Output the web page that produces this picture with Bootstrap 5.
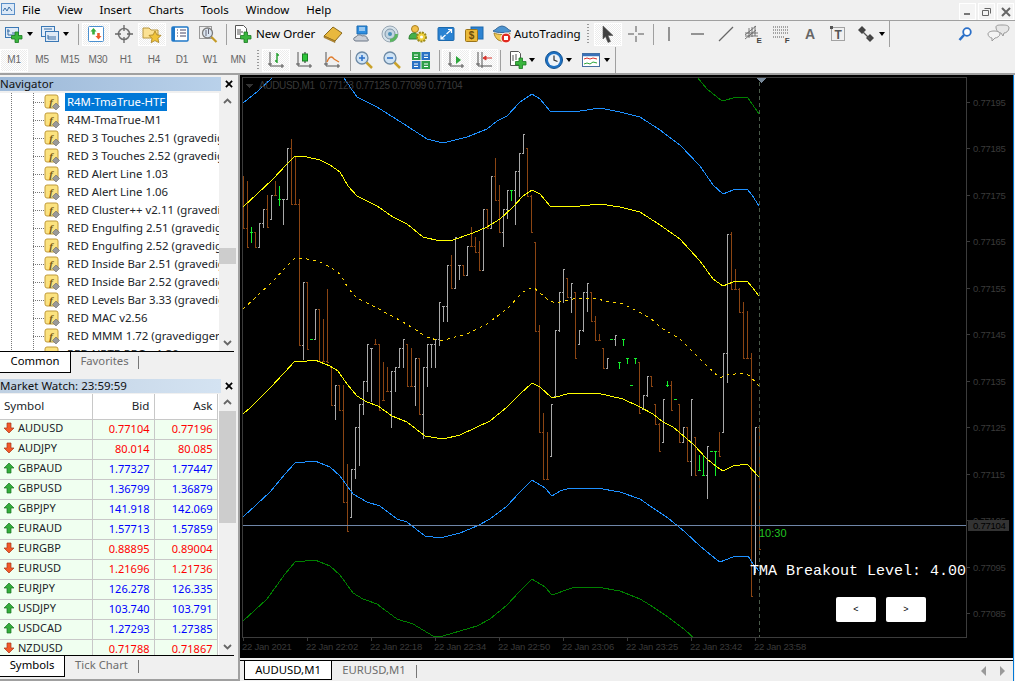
<!DOCTYPE html>
<html lang="en">
<head>
<meta charset="UTF-8">
<title>MetaTrader 4</title>
<link rel="stylesheet" href="https://cdn.jsdelivr.net/npm/bootstrap@5.3.0/dist/css/bootstrap.min.css">
<style>
html, body { background: #fff; overflow: hidden; }
body { font-family: "Noto Sans", "Liberation Sans", sans-serif; font-size: 12px; color: #000; line-height: 1; }
.app { width: 1015px; height: 681px; }

/* menu */
.menu-bar { height: 20px; background: #f0f0f0; padding: 0; flex-wrap: nowrap; }
.menu-bar.navbar-expand .navbar-nav { gap: 17px; margin: 4px 0 0 7px; }
.menu-bar.navbar-expand .navbar-nav .nav-link { font-size: 11.5px; color: #000; padding: 0; }
.app-icon { width: 14px; height: 16px; margin: 1px 0 0 1px; }
.win-btn { width: 17px; height: 17px; background: #f4f4f4; border: 1px solid #fff; margin-left: 2px; display: flex; align-items: center; justify-content: center; }
.win-btns { margin-right: 1px; }

/* toolbars */
.tb-wrap { height: 27px; background: #f0f0f0; border-top: 1px solid #a0a0a0; }
.tb-wrap.second { border-top: 0; height: 28px; border-bottom: 2px solid #a0a0a0; }
.tb-one { width: 890px; height: 27px; border-right: 1px solid #a0a0a0; border-bottom: 1px solid #a0a0a0; }
.tb-two { width: 616px; height: 26px; border-right: 1px solid #a0a0a0; }
.tb-btn { width: 28px; height: 23px; padding: 0; border: 1px solid transparent; border-radius: 0; background: transparent; display: flex; align-items: center; justify-content: center; flex: none; color: #666; font-size: 10px; letter-spacing: -.2px; font-family: "Liberation Sans", sans-serif; background-clip: padding-box; }
.tb-btn.on { background: repeating-conic-gradient(#ececec 0 25%, #fff 0 50%) 0 0 / 2px 2px; background-clip: padding-box; outline: 1px solid #fff; outline-offset: -1px; }
.tb-btn.wide { justify-content: flex-start; padding-left: 3px; gap: 3px; color: #000; font-size: 11.6px; letter-spacing: 0; font-family: "Noto Sans", sans-serif; }
.tb-order { width: 90px; }
.tb-auto { width: 94px; gap: 2px !important; font-size: 11.5px !important; }
.tb-caret { width: 8px; height: 8px; flex: none; display: flex; align-items: center; justify-content: center; }
.tb-caret::after { content: ""; border: 3px solid transparent; border-top: 4px solid #000; border-bottom: 0; }
.tb-sep { width: 1px; height: 21px; background: #a0a0a0; flex: none; }
.tb-grip { width: 2px; height: 21px; flex: none; background: repeating-linear-gradient(#999 0 1px, transparent 1px 3px); }
.ic { width: 20px; height: 20px; display: block; flex: none; }
.gl-n4 { margin-left: -4px; } .gl-n3 { margin-left: -3px; } .gl-n2 { margin-left: -2px; } .gl-n1 { margin-left: -1px; }
.gl-1 { margin-left: 1px; } .gl-2 { margin-left: 2px; } .gl-3 { margin-left: 3px; } .gl-4 { margin-left: 4px; } .gl-5 { margin-left: 5px; } .gl-8 { margin-left: 8px; }
.tb-right { gap: 11px; margin-right: 5px; }

/* left side */
.main-area { height: 606px; background: #f0f0f0; }
.side { width: 240px; height: 606px; padding-top: 2px; flex: none; border-right: 2px solid #a0a0a0; border-bottom: 2px solid #a0a0a0; background: #f0f0f0; }
.pane-title { height: 14px; display: flex; align-items: center; flex: none; }
.pane-title span { width: 221px; height: 14px; line-height: 14px; font-size: 11.5px; color: #111; overflow: hidden; white-space: nowrap; }
.title-on span { background: linear-gradient(90deg, #9db9d8, #b9d1ea); }
.title-off { margin-top: 6px; }
.title-off span { background: linear-gradient(90deg, #bfd0e2, #d4e3f2); }
.title-x { width: 8px; height: 8px; margin-left: 4px; }
.pane-body { display: flex; background: #fff; overflow: hidden; width: 236px; flex: none; }
.tree-pane { margin-top: 2px; }
.quote-pane { margin-top: 1px; }
.tree-box { width: 219px; height: 258px; overflow: hidden; background: #fff; }
.tree-row { height: 18px; display: flex; align-items: center; white-space: nowrap; padding: 0; border: 0; background: repeating-linear-gradient(#777 0 1px, transparent 1px 2px) 11px 0 / 1px 18px no-repeat, repeating-linear-gradient(#777 0 1px, transparent 1px 2px) 33px 0 / 1px 18px no-repeat; border-radius: 0; }
.tree-dash { width: 11px; margin-left: 33px; border-top: 1px dotted #777; flex: none; }
.tree-ic { width: 16px; height: 16px; flex: none; }
.tree-txt { margin-left: 5px; padding: 0 2px; height: 18px; line-height: 18px; font-size: 11.4px; }
.tree-txt.sel { background: #0078d7; color: #fff; }
.sbar { width: 17px; flex: none; background: #f0f0f0; display: flex; flex-direction: column; align-items: center; justify-content: space-between; padding: 5px 0; position: relative; }
.sbar svg { width: 9px; height: 6px; }
.sbar-tree { height: 258px; }
.sbar-quote { height: 261px; }
.sbar-thumb { position: absolute; left: 0; right: 0; background: #cdcdcd; }
.thumb-tree { top: 155px; height: 16px; }
.thumb-quote { top: 17px; height: 112px; }
.ui-tabs { display: flex; height: 22px; width: 234px; border-top: 1px solid #000; background: #f0f0f0; flex: none; }
.ui-tab { height: 21px; line-height: 18px; font-size: 11.3px; color: #6d6d6d; padding: 0; text-align: center; flex: none; }
.ui-tab.active { background: #fff; color: #000; border-right: 1px solid #000; border-bottom: 1px solid #000; }
.ui-sep { width: 1px; height: 13px; margin-top: 4px; background: #777; flex: none; }
.tw-71 { width: 71px; } .tw-67 { width: 67px; } .tw-65 { width: 65px; } .tw-73 { width: 73px; } .tw-88 { width: 88px; } .tw-85 { width: 84px; }
.quote-box { width: 219px; height: 261px; overflow: hidden; background: #fff; }
.quote-table { width: 217px; table-layout: fixed; margin: 0; --bs-table-border-color: #c8c8c8; --bs-table-bg: transparent; border-collapse: collapse; }
.quote-table .col-sym { width: 92px; } .quote-table .col-bid { width: 62px; } .quote-table .col-ask { width: 63px; }
.quote-table th, .quote-table td { padding: 0 4px; height: 20px; font-size: 11px; font-weight: 400; text-align: right; white-space: nowrap; vertical-align: middle; border: 1px solid #c8c8c8; border-top: 0; border-left: 0; }
.quote-table th { height: 25px; font-size: 11.6px; }
.quote-table td { background: #f0fff0; padding-bottom: 2px; }
.quote-table th:first-child, .quote-table td:first-child { text-align: left; }
.quote-table td:first-child svg { width: 12px; height: 12px; vertical-align: -2px; margin: 0 3px 0 -1px; }
.px-dn { color: #f00 !important; }
.px-up { color: #00f !important; }

/* chart */
.chart-col { width: 774px; height: 606px; border-right: 1px solid #0078d7; }
.chart-box { height: 583px; background: #000; }
.chart-box svg { display: block; }
.chart-btn { position: absolute; top: 522px; width: 40px; height: 25px; padding: 0; background: #fff; border: 0; border-radius: 2px; color: #000; font-size: 9px; font-family: "Liberation Sans", sans-serif; }
.cb-prev { left: 596px; }
.cb-next { left: 646px; }
.chart-tabs { height: 21px; margin-top: 2px; border-top: 1px solid #000; background: #efefef; padding-left: 4px; position: relative; }
.chart-tabs .ui-tab { height: 19px; line-height: 17px; }
.chart-tabs .ui-tab.active { border-left: 1px solid #000; }
.tab-arrows { gap: 10px; margin-right: 7px; margin-top: 5px; }
.scale-txt { font-size: 9.5px; letter-spacing: -.25px; fill: #3a3a3a; }
.chart-title { font-size: 10px; letter-spacing: -.34px; fill: #3a3a3a; }
</style>
</head>
<body>
<svg width="0" height="0" class="position-absolute">
  <defs>
    <symbol id="plus" viewBox="0 0 20 20"><path d="M11 8h3.500v3.500H18v3.500h-3.500V18.500H11V15H7.500v-3.500H11z" fill="#3ab53e" stroke="#1b7a22" stroke-width=".8"/></symbol>
    <symbol id="i-new" viewBox="0 0 20 20"><rect x="1.500" y="3.500" width="13" height="10" fill="#dfeaf6" stroke="#3b78b5"/><path d="M4 5v6h8M3 7h3M8 9h4" stroke="#3a6ea5" fill="none"/><use href="#plus"/></symbol>
    <symbol id="i-prof" viewBox="0 0 20 20"><rect x="1.500" y="2.500" width="13" height="10" fill="#e3edf8" stroke="#3b78b5"/><rect x="5.500" y="7.500" width="13" height="10" fill="#dfeaf6" stroke="#3b78b5"/><path d="M4 5h8M8 11v4h8M8 13h8" stroke="#3a6ea5" fill="none"/></symbol>
    <symbol id="i-mw" viewBox="0 0 20 20"><rect x="2.500" y="2.500" width="15" height="15" rx="1" fill="#fff" stroke="#4a90d0"/><path d="M7.500 4l3 3.500H8.800v3H6.200v-3H4.500z" fill="#37ad3c"/><path d="M12.500 15.500l-3-3.500h1.700V9h2.600v3h1.700z" fill="#ef5a2a"/></symbol>
    <symbol id="i-cross" viewBox="0 0 20 20"><circle cx="10" cy="10" r="5.500" fill="none" stroke="#777" stroke-width="1.600"/><path d="M10 1v6M10 13v6M1 10h6M13 10h6" stroke="#666" stroke-width="1.300"/></symbol>
    <symbol id="i-nav" viewBox="0 0 20 20"><path d="M1 4h6l2 2h7v8H1z" fill="#fbe193" stroke="#b8963e"/><path d="M13 7l1.900 3.900 4.100.5-3 3 .8 4.200-3.800-2-3.800 2 .8-4.200-3-3 4.100-.5z" fill="#f0c33a" stroke="#a67f1c" stroke-width=".8"/></symbol>
    <symbol id="i-term" viewBox="0 0 20 20"><rect x="2" y="3" width="16" height="14" rx="1" fill="#fff" stroke="#1f78c8" stroke-width="1.500"/><path d="M2 3h3v14H2z" fill="#1f78c8"/><path d="M7 6h1M7 9h1M7 12h1M10 6h6M10 9h6M10 12h6" stroke="#446" fill="none"/></symbol>
    <symbol id="i-test" viewBox="0 0 20 20"><rect x="1.500" y="2.500" width="12" height="12" fill="#eee" stroke="#999"/><circle cx="9.500" cy="9" r="5" fill="#dbe6f2" stroke="#7c7c7c" stroke-width="1.300"/><path d="M8 6v6M10.500 5v5" stroke="#667"/><path d="M13.500 13l5 5" stroke="#c59b26" stroke-width="2.200"/></symbol>
    <symbol id="i-order" viewBox="0 0 20 20"><path d="M2.500 1.500h8l3 3v10h-11z" fill="#fff" stroke="#555"/><path d="M4 6h4M4 8h6M4 10h4" stroke="#555"/><use href="#plus"/></symbol>
    <symbol id="i-book" viewBox="0 0 20 20"><path d="M1 12L10 3l9 6-7 8z" fill="#e8b83e" stroke="#8a6a1c"/><path d="M1 12l11 5v1.500L1 13.500z" fill="#c58d2b" stroke="#8a6a1c" stroke-width=".6"/></symbol>
    <symbol id="i-mkt" viewBox="0 0 20 20"><path d="M5 2h10v8H5z" fill="#2e8ee0" stroke="#1d6bb0"/><path d="M7 4h6M7 6h6" stroke="#fff"/><path d="M4 17c-3 0-3-4 0-4 1-2 4-3 6-1 3-1 6 1 5 3 2 0 2 2 0 2z" fill="#c9ced6" stroke="#6a7686"/></symbol>
    <symbol id="i-sig" viewBox="0 0 20 20"><circle cx="10" cy="10" r="8" fill="#d7e3ea" stroke="#98a6b3"/><circle cx="10" cy="10" r="5" fill="#c3d4e0" stroke="#7f95a8"/><circle cx="10" cy="10" r="2" fill="#4a8fb8"/><path d="M10 18a8 8 0 0 0 8-8h-3a5 5 0 0 1-5 5z" fill="#5cb560"/></symbol>
    <symbol id="i-usr" viewBox="0 0 20 20"><circle cx="7" cy="5" r="3.500" fill="#f3c04a" stroke="#a97f1f"/><path d="M1 15c0-5 3-6 5-6s4 1 4 6z" fill="#46b04a" stroke="#2a7f2e"/><circle cx="13.500" cy="13" r="4.500" fill="#efd13c" stroke="#9c8a1b" stroke-width="2" stroke-dasharray="2 1"/><circle cx="13.500" cy="13" r="1.500" fill="#fff"/></symbol>
    <symbol id="i-exp" viewBox="0 0 20 20"><rect x="2" y="3.500" width="16" height="13" rx="1" fill="#2a82d2" stroke="#1c69ad"/><path d="M10.500 10l5-4.500M12 5.500h3.500V9M9.500 11l-4.500 4M5 11.500V15h3.500" stroke="#fff" fill="none" stroke-width="1.200"/></symbol>
    <symbol id="i-usd" viewBox="0 0 20 20"><rect x="7" y="3" width="12" height="12" fill="#2d83d2" stroke="#1c69ad"/><rect x="1.500" y="5.500" width="12" height="12" rx="1" fill="#eab93a" stroke="#9b7419"/><text x="7.500" y="15" font-size="10" font-weight="700" text-anchor="middle" fill="#6b4d08" font-family="Liberation Sans">$</text></symbol>
    <symbol id="i-auto" viewBox="0 0 20 20"><path d="M1 7c3-1 5-5 9-5s6 4 9 5c-3 2-15 2-18 0z" fill="#4d94d0" stroke="#36699a"/><path d="M2 9c4 2 12 2 16 0-1 5-4 8-8 8S3 14 2 9z" fill="#f1cb57" stroke="#a98426"/><circle cx="14" cy="14" r="5" fill="#e02a20" stroke="#fff"/><rect x="12" y="12" width="4" height="4" fill="#fff"/></symbol>
    <symbol id="i-ptr" viewBox="0 0 20 20"><path d="M5 2l10 9.500h-5l2.500 6-2.500 1-2.500-6L5 15z" fill="#404040" stroke="#555" stroke-width=".6"/></symbol>
    <symbol id="i-hair" viewBox="0 0 20 20"><path d="M10 2v6M10 12v6M2 10h6M12 10h6" stroke="#555"/></symbol>
    <symbol id="i-vl" viewBox="0 0 20 20"><path d="M10 3v14" stroke="#555" stroke-width="1.200"/></symbol>
    <symbol id="i-hl" viewBox="0 0 20 20"><path d="M3 10h13" stroke="#555" stroke-width="1.200"/></symbol>
    <symbol id="i-tl" viewBox="0 0 20 20"><path d="M3 17L17 3" stroke="#666" stroke-width="1.200"/></symbol>
    <symbol id="i-chan" viewBox="0 0 20 20"><path d="M1 11L12 2M1 15L12 6M5 4v10M8 3v10M11 2v10M1 9h13M1 12h13" stroke="#666" fill="none" stroke-width=".9"/><text x="15" y="19" font-size="8" font-weight="700" text-anchor="middle" fill="#444" font-family="Liberation Sans">E</text></symbol>
    <symbol id="i-fibo" viewBox="0 0 20 20"><path d="M1 3h15M1 6h15M1 9h15M1 13h11" stroke="#555" stroke-dasharray="1 1"/><text x="15" y="19" font-size="8" font-weight="700" text-anchor="middle" fill="#444" font-family="Liberation Sans">F</text></symbol>
    <symbol id="i-txt" viewBox="0 0 20 20"><text x="10" y="15" font-size="14" font-weight="700" text-anchor="middle" fill="#666" font-family="Liberation Sans">A</text></symbol>
    <symbol id="i-lab" viewBox="0 0 20 20"><rect x="3.500" y="3.500" width="13" height="13" fill="none" stroke="#555" stroke-dasharray="1 1"/><rect x="2" y="2" width="3" height="3" fill="#555"/><text x="10" y="14.500" font-size="12" font-weight="700" text-anchor="middle" fill="#555" font-family="Liberation Sans">T</text></symbol>
    <symbol id="i-arr" viewBox="0 0 20 20"><path d="M6 2l4 4-4 4-4-4zM14 10l4 4-4 4-4-4z" fill="#444"/><path d="M7 8l7 7" stroke="#555" stroke-width="1.300"/></symbol>
    <symbol id="i-search" viewBox="0 0 20 20"><circle cx="12" cy="8" r="3.800" fill="#fff" stroke="#2a6fc8" stroke-width="1.800"/><path d="M9 11l-4.500 5" stroke="#2a6fc8" stroke-width="2.600"/></symbol>
    <symbol id="i-chat" viewBox="0 0 24 20"><path d="M10 3c0-2 3-2 6-2s7 0 7 3-3 5-5 5l-1 3-2-3c-3 0-5-3-5-6z" fill="#e6e6e6" stroke="#999"/><path d="M2 10c0-2 3-3 6-3s6 1 6 3-3 4-5 4l-3 3v-3c-2 0-4-2-4-4z" fill="#f4f4f4" stroke="#999"/></symbol>
    <symbol id="i-axes" viewBox="0 0 20 20"><path d="M4 2v14h14M2 14h4M16 14v4" stroke="#555" fill="none"/></symbol>
    <symbol id="i-bar" viewBox="0 0 20 20"><use href="#i-axes"/><path d="M11 3v10M9 11h2M11 5h2" stroke="#1f9d2a" stroke-width="1.400" fill="none"/></symbol>
    <symbol id="i-cnd" viewBox="0 0 20 20"><use href="#i-axes"/><path d="M11 2v11" stroke="#222"/><rect x="8.500" y="4" width="5" height="7" fill="#2ec43a" stroke="#1a7f24"/></symbol>
    <symbol id="i-lin" viewBox="0 0 20 20"><use href="#i-axes"/><path d="M5 12c2-6 5-6 7-3l5 3" stroke="#e07a2a" fill="none" stroke-width="1.300"/></symbol>
    <symbol id="i-zin" viewBox="0 0 20 20"><circle cx="8" cy="8" r="6" fill="#cfe3f4" stroke="#6d8aa5" stroke-width="1.300"/><path d="M5 8h6M8 5v6" stroke="#2a6fc8" stroke-width="1.500"/><path d="M12.500 12.500l5.500 5.500" stroke="#caa22b" stroke-width="2.500"/></symbol>
    <symbol id="i-zout" viewBox="0 0 20 20"><circle cx="8" cy="8" r="6" fill="#cfe3f4" stroke="#6d8aa5" stroke-width="1.300"/><path d="M5 8h6" stroke="#2a6fc8" stroke-width="1.500"/><path d="M12.500 12.500l5.500 5.500" stroke="#caa22b" stroke-width="2.500"/></symbol>
    <symbol id="i-tile" viewBox="0 0 20 20"><rect x="1" y="2" width="8.500" height="8" fill="#2f9f49"/><rect x="10.500" y="2" width="8.500" height="8" fill="#2a72c4"/><rect x="1" y="11" width="8.500" height="8" fill="#2a72c4"/><rect x="10.500" y="11" width="8.500" height="8" fill="#2f9f49"/><path d="M3 5h4M13 5h4M3 7.500h4M13 7.500h4M3 14h4M13 14h4M3 16.500h4M13 16.500h4" stroke="#fff"/></symbol>
    <symbol id="i-shift" viewBox="0 0 20 20"><use href="#i-axes"/><path d="M10 6l5 4-5 4z" fill="#2ca63a"/></symbol>
    <symbol id="i-scr" viewBox="0 0 20 20"><path d="M4 2v14h14M2 14h4" stroke="#555" fill="none"/><path d="M8 2v14M8 16v2" stroke="#555"/><path d="M12 8h6M12 6l-3 2 3 2z" fill="#d8322a" stroke="#d8322a"/></symbol>
    <symbol id="i-ind" viewBox="0 0 20 20"><path d="M2.500 1.500h8l2 2v12h-10z" fill="#fff" stroke="#555"/><path d="M5 5v6M8 4v6" stroke="#555"/><use href="#plus"/></symbol>
    <symbol id="i-clk" viewBox="0 0 20 20"><circle cx="10" cy="10" r="8.500" fill="#1f72c4" stroke="#14528f"/><circle cx="10" cy="10" r="6" fill="#eef3f8"/><path d="M10 5.500V10l3.500 1.500" stroke="#333" fill="none" stroke-width="1.200"/></symbol>
    <symbol id="i-tpl" viewBox="0 0 20 20"><rect x="1.500" y="3.500" width="17" height="13" fill="#fff" stroke="#466f9f"/><path d="M1.500 5h17" stroke="#3a72b8" stroke-width="2.500"/><path d="M3 9l3-1 3 1 3-1 4 1" stroke="#d8322a" fill="none"/><path d="M3 14l3-1 3 1 3-2 4 1" stroke="#2ca63a" fill="none"/></symbol>
    <symbol id="i-f" viewBox="0 0 16 16"><rect x="1" y="1" width="13" height="13" rx="2" fill="#fbe27f" stroke="#c09a3a"/><text x="7" y="11.500" font-size="11" font-style="italic" font-weight="700" text-anchor="middle" fill="#7a5d16" font-family="Liberation Serif">f</text><path d="M12 9l3.500 3.500L12 16l-3.500-3.500z" fill="#9a9a9a" stroke="#666" stroke-width=".6"/></symbol>
    <symbol id="a-up" viewBox="0 0 12 12"><path d="M6 1l5 5H8v5H4V6H1z" fill="#33ad3b" stroke="#1a7322" stroke-width=".7"/></symbol>
    <symbol id="a-dn" viewBox="0 0 12 12"><path d="M6 11l5-5H8V1H4v5H1z" fill="#f2592a" stroke="#a8381a" stroke-width=".7"/></symbol>
    <symbol id="x-mark" viewBox="0 0 9 9"><path d="M1 1l7 7M8 1L1 8" stroke="#000" stroke-width="2"/></symbol>
  </defs>
</svg>

<div class="app d-flex flex-column">
  <!-- menu bar -->
  <nav class="navbar navbar-expand menu-bar d-flex align-items-start">
    <svg class="app-icon" viewBox="0 0 14 16"><rect x=".5" y="2.500" width="13" height="11" fill="#dce9f7" stroke="#5a8fc8"/><path d="M2 10l2-3 2 3 2-4 3 4" stroke="#3a6ea5" fill="none"/></svg>
    <div class="navbar-nav">
      <a class="nav-link">File</a>
      <a class="nav-link">View</a>
      <a class="nav-link">Insert</a>
      <a class="nav-link">Charts</a>
      <a class="nav-link">Tools</a>
      <a class="nav-link">Window</a>
      <a class="nav-link">Help</a>
    </div>
    <div class="d-flex ms-auto win-btns mt-auto">
      <div class="win-btn"><svg width="9" height="9"><rect x="1" y="6" width="6" height="2" fill="#777"/></svg></div>
      <div class="win-btn"><svg width="11" height="11"><path d="M3.500 2.500h6v5M1.500 4.500h6v5h-6z" fill="none" stroke="#666"/></svg></div>
      <div class="win-btn"><svg width="10" height="10"><path d="M1 1l8 8M9 1l-8 8" stroke="#666" stroke-width="2"/></svg></div>
    </div>
  </nav>

  <!-- standard + line studies toolbar -->
  <div class="tb-wrap d-flex">
    <div class="tb-one d-flex align-items-center">
      <button class="tb-btn"><svg class="ic"><use href="#i-new"/></svg></button><span class="tb-caret gl-n2"></span>
      <button class="tb-btn gl-2"><svg class="ic"><use href="#i-prof"/></svg></button><span class="tb-caret gl-n2"></span>
      <span class="tb-sep gl-8"></span>
      <button class="tb-btn on gl-3"><svg class="ic"><use href="#i-mw"/></svg></button>
      <button class="tb-btn"><svg class="ic"><use href="#i-cross"/></svg></button>
      <button class="tb-btn on"><svg class="ic"><use href="#i-nav"/></svg></button>
      <button class="tb-btn"><svg class="ic"><use href="#i-term"/></svg></button>
      <button class="tb-btn"><svg class="ic"><use href="#i-test"/></svg></button>
      <span class="tb-sep gl-4"></span>
      <button class="tb-btn wide tb-order gl-2"><svg class="ic"><use href="#i-order"/></svg>New Order</button>
      <button class="tb-btn"><svg class="ic"><use href="#i-book"/></svg></button>
      <button class="tb-btn gl-1"><svg class="ic"><use href="#i-mkt"/></svg></button>
      <button class="tb-btn"><svg class="ic"><use href="#i-sig"/></svg></button>
      <button class="tb-btn"><svg class="ic"><use href="#i-usr"/></svg></button>
      <button class="tb-btn"><svg class="ic"><use href="#i-exp"/></svg></button>
      <button class="tb-btn"><svg class="ic"><use href="#i-usd"/></svg></button>
      <button class="tb-btn wide tb-auto"><svg class="ic"><use href="#i-auto"/></svg>AutoTrading</button>
      <span class="tb-grip gl-5"></span>
      <button class="tb-btn on gl-5"><svg class="ic"><use href="#i-ptr"/></svg></button>
      <button class="tb-btn"><svg class="ic"><use href="#i-hair"/></svg></button>
      <span class="tb-sep gl-3"></span>
      <button class="tb-btn gl-1"><svg class="ic"><use href="#i-vl"/></svg></button>
      <button class="tb-btn gl-1"><svg class="ic"><use href="#i-hl"/></svg></button>
      <button class="tb-btn"><svg class="ic"><use href="#i-tl"/></svg></button>
      <button class="tb-btn"><svg class="ic"><use href="#i-chan"/></svg></button>
      <button class="tb-btn"><svg class="ic"><use href="#i-fibo"/></svg></button>
      <button class="tb-btn"><svg class="ic"><use href="#i-txt"/></svg></button>
      <button class="tb-btn"><svg class="ic"><use href="#i-lab"/></svg></button>
      <button class="tb-btn"><svg class="ic"><use href="#i-arr"/></svg></button><span class="tb-caret gl-n2"></span>
    </div>
    <div class="d-flex align-items-center ms-auto tb-right">
      <svg class="ic"><use href="#i-search"/></svg>
      <svg width="24" height="20"><use href="#i-chat"/></svg>
    </div>
  </div>

  <!-- periodicity + charts toolbar -->
  <div class="tb-wrap second">
    <div class="tb-two d-flex align-items-center">
      <button class="tb-btn on">M1</button>
      <button class="tb-btn">M5</button>
      <button class="tb-btn">M15</button>
      <button class="tb-btn">M30</button>
      <button class="tb-btn">H1</button>
      <button class="tb-btn">H4</button>
      <button class="tb-btn">D1</button>
      <button class="tb-btn">W1</button>
      <button class="tb-btn">MN</button>
      <span class="tb-grip gl-5"></span>
      <button class="tb-btn on gl-3"><svg class="ic"><use href="#i-bar"/></svg></button>
      <button class="tb-btn"><svg class="ic"><use href="#i-cnd"/></svg></button>
      <button class="tb-btn"><svg class="ic"><use href="#i-lin"/></svg></button>
      <span class="tb-sep gl-4"></span>
      <button class="tb-btn gl-n1"><svg class="ic"><use href="#i-zin"/></svg></button>
      <button class="tb-btn"><svg class="ic"><use href="#i-zout"/></svg></button>
      <button class="tb-btn gl-1"><svg class="ic"><use href="#i-tile"/></svg></button>
      <span class="tb-sep gl-4"></span>
      <button class="tb-btn on gl-2"><svg class="ic"><use href="#i-shift"/></svg></button>
      <button class="tb-btn on"><svg class="ic"><use href="#i-scr"/></svg></button>
      <span class="tb-sep gl-2"></span>
      <button class="tb-btn gl-3"><svg class="ic"><use href="#i-ind"/></svg></button><span class="tb-caret gl-n4"></span>
      <button class="tb-btn gl-4"><svg class="ic"><use href="#i-clk"/></svg></button><span class="tb-caret gl-n3"></span>
      <button class="tb-btn gl-4"><svg class="ic"><use href="#i-tpl"/></svg></button><span class="tb-caret gl-n2"></span>
    </div>
  </div>

  <div class="main-area d-flex">
    <!-- navigator + market watch -->
    <div class="side d-flex flex-column">
      <div class="pane-title title-on"><span>Navigator</span><svg class="title-x"><use href="#x-mark"/></svg></div>
      <div class="pane-body tree-pane">
        <div class="tree-box list-group list-group-flush" id="tree"></div>
        <div class="sbar sbar-tree">
          <svg viewBox="0 0 9 6"><path d="M1 5l3.500-3.500L8 5" fill="none" stroke="#666" stroke-width="1.800"/></svg>
          <div class="sbar-thumb thumb-tree"></div>
          <svg viewBox="0 0 9 6"><path d="M1 1l3.500 3.500L8 1" fill="none" stroke="#666" stroke-width="1.800"/></svg>
        </div>
      </div>
      <div class="ui-tabs nav">
        <div class="ui-tab active tw-71">Common</div>
        <div class="ui-tab tw-67">Favorites</div>
        <div class="ui-sep"></div>
      </div>
      <div class="pane-title title-off"><span>Market Watch: 23:59:59</span><svg class="title-x"><use href="#x-mark"/></svg></div>
      <div class="pane-body quote-pane">
        <div class="quote-box">
          <table class="table quote-table">
            <colgroup><col class="col-sym"><col class="col-bid"><col class="col-ask"></colgroup>
            <thead><tr><th>Symbol</th><th>Bid</th><th>Ask</th></tr></thead>
            <tbody id="quotes"></tbody>
          </table>
        </div>
        <div class="sbar sbar-quote">
          <svg viewBox="0 0 9 6"><path d="M1 5l3.500-3.500L8 5" fill="none" stroke="#666" stroke-width="1.800"/></svg>
          <div class="sbar-thumb thumb-quote"></div>
          <svg viewBox="0 0 9 6"><path d="M1 1l3.500 3.500L8 1" fill="none" stroke="#666" stroke-width="1.800"/></svg>
        </div>
      </div>
      <div class="ui-tabs nav">
        <div class="ui-tab active tw-65">Symbols</div>
        <div class="ui-tab tw-73">Tick Chart</div>
        <div class="ui-sep"></div>
      </div>
    </div>

    <!-- chart window -->
    <div class="chart-col">
      <div class="chart-box position-relative">
        <svg id="chart" width="773" height="583" viewBox="240 76 773 583" shape-rendering="crispEdges" font-family="Liberation Sans, sans-serif">
          <defs><clipPath id="plot"><rect x="243" y="79" width="724" height="559"/></clipPath></defs>
          <g id="bars" clip-path="url(#plot)"></g>
          <g clip-path="url(#plot)" fill="none">
            <polyline stroke="#008000" points="690,70 697,78 707,90 722,102 737,98 748,99 759,115"/>
            <polyline stroke="#1e90ff" points="243,104 258,92 272,79 285,65 295,60 330,70 344,79 357,98 377,108 407,127 427,140 443,144 467,138 487,130 497,122 507,117 520,103 532,95 540,100 550,112 560,113 580,112 600,109 620,113 640,118 660,131 680,146 700,167 713,186 723,195 733,191 747,190 752,196 759,207"/>
            <polyline stroke="#ffff00" points="243,208 257,195 273,180 287,165 295,157 307,158 320,161 330,166 340,173 348,187 357,197 377,207 393,218 407,225 423,238 440,242 453,241 473,234 487,228 500,220 513,208 523,197 532,191 540,195 550,207 560,208 580,207 600,205 620,208 640,213 660,226 680,240 700,262 713,280 723,287 733,283 747,282 752,288 759,297"/>
            <polyline stroke="#ffd700" stroke-dasharray="3 4" points="243,310 257,297 273,282 287,267 295,259 307,260 320,263 330,268 340,275 348,289 357,299 377,309 403,323 427,338 440,342 467,335 487,325 507,310 523,293 533,288 547,300 553,303 560,303 573,300 593,299 610,303 623,305 637,312 650,319 663,330 680,340 693,353 707,367 720,379 727,376 743,374 750,377 759,387"/>
            <polyline stroke="#ffff00" points="243,415 250,409 270,389 285,373 295,362 307,362 315,361 330,367 338,372 347,385 357,397 367,403 378,407 392,417 407,423 425,437 443,440 460,436 477,428 490,422 507,408 520,395 532,384 540,388 552,399 560,397 570,394 597,394 623,400 640,408 653,415 663,423 673,428 693,445 707,460 717,468 723,472 733,467 747,465 759,478"/>
            <polyline stroke="#1e90ff" points="243,518 270,493 285,475 295,464 315,462 330,468 340,477 353,495 367,503 380,507 397,520 407,523 425,537 440,539 460,534 477,527 490,520 507,507 520,493 532,481 545,489 552,497 560,492 570,489 597,489 620,493 640,500 650,507 668,519 685,533 700,547 712,557 720,563 733,558 748,557 753,565 759,572"/>
            <polyline stroke="#008000" points="243,622 267,600 285,575 295,563 315,561 330,567 340,576 353,594 363,600 377,605 397,620 413,625 433,637 443,637 477,627 490,620 507,606 520,592 532,580 545,588 552,596 572,589 597,588 620,592 640,600 650,606 668,618 685,631 695,640"/>
          </g>
          <line x1="759.500" y1="83" x2="759.500" y2="638" stroke="#4a5a4a" stroke-dasharray="4 3"/>
          <line x1="243" y1="526.500" x2="967" y2="526.500" stroke="#6f86a8"/>
          <polygon points="757,79 766,79 761.500,84" fill="#778899"/>
          <polygon points="246,85 253,85 249.500,89" fill="#333"/>
          <rect x="242.500" y="78.500" width="724" height="559.500" fill="none" stroke="#3c3c3c"/>
          <g id="scale"></g>
          <rect x="968" y="521" width="41" height="11" fill="#333"/>
          <text x="973" y="530" font-size="9.500" letter-spacing="-.25" fill="#000">0.77104</text>
          <text x="259" y="90" class="chart-title">AUDUSD,M1&#160; 0.77123 0.77125 0.77099 0.77104</text>
          <text x="759" y="538" font-size="11" fill="#22c422">10:30</text>
          <text x="750" y="575.500" font-size="15" fill="#fff" font-family="Liberation Mono, monospace">TMA Breakout Level: 4.00</text>
        </svg>
        <button class="btn chart-btn cb-prev">&lt;</button>
        <button class="btn chart-btn cb-next">&gt;</button>
      </div>
      <div class="chart-tabs d-flex">
        <div class="ui-tab active tw-88">AUDUSD,M1</div>
        <div class="ui-tab tw-85">EURUSD,M1</div>
        <div class="ui-sep"></div>
        <div class="d-flex ms-auto tab-arrows">
          <svg width="8" height="10"><path d="M6 0v10L1 5z" fill="#999"/></svg>
          <svg width="8" height="10"><path d="M2 0v10l5-5z" fill="#999"/></svg>
        </div>
      </div>
    </div>
  </div>
</div>

<script src="https://cdn.jsdelivr.net/npm/bootstrap@5.3.0/dist/js/bootstrap.bundle.min.js"></script>
<script>
// navigator rows
const treeNames = ['R4M-TmaTrue-HTF', 'R4M-TmaTrue-M1', 'RED 3 Touches 2.51 (gravedigger)', 'RED 3 Touches 2.52 (gravedigger)',
  'RED Alert Line 1.03', 'RED Alert Line 1.06', 'RED Cluster++ v2.11 (gravedigger)', 'RED Engulfing 2.51 (gravedigger)',
  'RED Engulfing 2.52 (gravedigger)', 'RED Inside Bar 2.51 (gravedigger)', 'RED Inside Bar 2.52 (gravedigger)',
  'RED Levels Bar 3.33 (gravedigger)', 'RED MAC v2.56', 'RED MMM 1.72 (gravedigger)', 'RED NRTR PRO - 1.30'];
document.getElementById('tree').innerHTML = treeNames.map((name, i) =>
  `<div class="tree-row list-group-item"><span class="tree-dash"></span><svg class="tree-ic"><use href="#i-f"/></svg><span class="tree-txt${i === 0 ? ' sel' : ''}">${name}</span></div>`).join('');

// market watch rows
const quotes = [['AUDUSD', 0, '0.77104', '0.77196'], ['AUDJPY', 0, '80.014', '80.085'], ['GBPAUD', 1, '1.77327', '1.77447'],
  ['GBPUSD', 1, '1.36799', '1.36879'], ['GBPJPY', 1, '141.918', '142.069'], ['EURAUD', 1, '1.57713', '1.57859'],
  ['EURGBP', 0, '0.88895', '0.89004'], ['EURUSD', 0, '1.21696', '1.21736'], ['EURJPY', 1, '126.278', '126.335'],
  ['USDJPY', 1, '103.740', '103.791'], ['USDCAD', 1, '1.27293', '1.27385'], ['NZDUSD', 0, '0.71788', '0.71867']];
document.getElementById('quotes').innerHTML = quotes.map(q => {
  const cls = q[1] ? 'px-up' : 'px-dn';
  return `<tr><td><svg><use href="#${q[1] ? 'a-up' : 'a-dn'}"/></svg>${q[0]}</td><td class="${cls}">${q[2]}</td><td class="${cls}">${q[3]}</td></tr>`;
}).join('');

// chart bars: x, kind (b bear, g bull, l doji), high, low, optional tick y
const bars = [[243,'b',177,229],[247,'b',182,248],[251,'l',228,243,233],[255,'b',233,248],[259,'g',224,248],[263,'g',210,228],[267,'b',196,228],[271,'g',196,220],
[275,'b',182,196],[279,'l',187,206,200],[283,'g',200,225],[287,'g',149,200],[291,'b',140,205],[295,'b',158,205],[299,'b',200,346],[303,'g',283,360],
[307,'b',283,350],[311,'l',340,340,340],[315,'g',310,340],[319,'b',310,362],[323,'b',320,362],[327,'b',290,363],[331,'b',368,406],[335,'g',386,420],
[339,'b',386,411],[343,'b',386,503],[347,'b',465,532],[351,'g',470,518],[355,'g',428,479],[359,'g',405,466],[363,'g',382,415],[367,'g',345,392],
[371,'g',349,402],[375,'b',340,345],[379,'b',345,411],[383,'b',363,401],[387,'b',368,392],[391,'g',372,428],[395,'g',368,392],[399,'g',349,368],
[403,'g',340,368],[407,'b',345,387],[411,'b',349,387],[415,'g',359,406],[419,'b',359,415],[423,'g',368,439],[427,'g',345,387],[431,'g',345,368],
[435,'g',340,368],[439,'g',303,346],[443,'g',307,322],[447,'g',266,322],[451,'b',256,289],[455,'g',238,289],[459,'g',266,280],[463,'b',266,276],
[467,'g',247,276],[471,'b',228,247],[475,'b',238,253],[479,'b',242,271],[483,'g',210,271],[487,'b',210,229],[491,'g',177,229],[495,'b',159,201],
[499,'b',186,233],[503,'g',210,247],[507,'g',191,219],[511,'l',191,201,191],[515,'g',172,225],[519,'g',154,197],[523,'g',135,154],[527,'b',149,197],
[531,'b',196,233],[535,'b',243,332],[539,'b',326,433],[543,'b',414,480],[547,'b',433,480],[551,'g',405,457],[555,'g',331,397],[559,'g',293,332],
[563,'g',270,303],[567,'b',279,298],[571,'g',284,313],[575,'b',293,359],[579,'g',331,345],[583,'g',293,332],[587,'g',284,312],[591,'b',293,322],
[595,'b',317,341],[599,'b',335,341],[603,'b',349,369],[607,'g',359,369],[611,'l',340,340,340],[615,'g',336,346],[619,'l',363,369,363],[623,'l',340,346,340],
[627,'l',359,364,359],[631,'l',386,386,386],[635,'l',359,364,359],[639,'b',363,414],[643,'g',396,410],[647,'g',377,397],[651,'b',377,387],[655,'b',405,425],
[659,'b',424,452],[663,'g',400,443],[667,'l',382,387,386],[671,'b',382,411],[675,'l',400,400,400],[679,'b',405,443],[683,'g',428,443],[687,'b',428,462],
[691,'g',400,476],[695,'b',438,476],[699,'l',456,471,471],[703,'l',456,476,476],[707,'g',447,499],[711,'l',452,452,452],[715,'l',452,476,452],[719,'b',433,457],
[723,'g',354,433],[727,'g',235,383],[731,'b',233,290],[735,'b',270,290],[739,'b',289,313],[743,'b',303,359],[747,'b',312,359],[751,'b',354,597],
[755,'g',428,573],[759,'b',427,550]];
const colors = { b: '#8b4513', g: '#a9a9a9', l: '#14f02c' };
const paths = { b: '', g: '', l: '' };
let prevClose = 200;
bars.forEach(([x, kind, hi, lo, tick]) => {
  const close = tick !== undefined ? tick : (kind === 'b' ? lo : hi);
  const open = tick !== undefined ? tick : Math.min(lo, Math.max(hi, prevClose));
  paths[kind] += `M${x + .5} ${hi}V${lo + 1}M${x - 1} ${open + .5}H${x + .5}M${x + .5} ${close + .5}H${x + 2}`;
  prevClose = close;
});
document.getElementById('bars').innerHTML = Object.keys(paths).map(k =>
  `<path d="${paths[k]}" fill="none" stroke="${colors[k]}"/>`).join('');

// price and time scales
const prices = ['0.77195', '0.77185', '0.77175', '0.77165', '0.77155', '0.77145', '0.77135', '0.77125', '0.77115', '0.77105', '0.77095', '0.77085'];
const times = ['22 Jan 2021', '22 Jan 22:02', '22 Jan 22:18', '22 Jan 22:34', '22 Jan 22:50', '22 Jan 23:06', '22 Jan 23:25', '22 Jan 23:42', '22 Jan 23:58'];
let scale = '';
prices.forEach((p, i) => {
  const y = Math.round(103 + i * 46.45);
  scale += `<line x1="967" x2="970" y1="${y + .5}" y2="${y + .5}" stroke="#3c3c3c"/><text x="973" y="${y + 4}" class="scale-txt">${p}</text>`;
});
times.forEach((t, i) => {
  const x = 243 + i * 64;
  scale += `<line x1="${x + .5}" x2="${x + .5}" y1="638" y2="642" stroke="#3c3c3c"/><text x="${x - 1}" y="651" class="scale-txt">${t}</text>`;
});
document.getElementById('scale').innerHTML = scale;
</script>
</body>
</html>
